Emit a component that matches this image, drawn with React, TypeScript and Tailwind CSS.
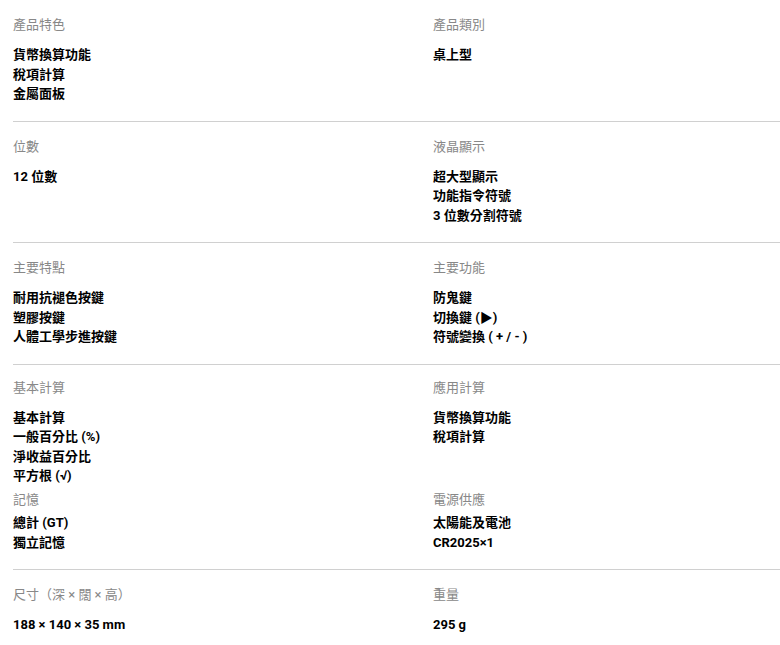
import React from "react";

type Spec = { label: string; values: string[] };

const font = { fontFamily: '"Roboto", "Noto Sans CJK TC", sans-serif' };

function Section({ label, values, last, sub }: Spec & { last?: boolean; sub?: boolean }) {
  return (
    <div className={last ? "" : "mb-[4.5px]"}>
      <p className={`text-[13px] leading-[19.5px] text-[#888888] ${sub ? "mb-[3.5px]" : "mb-[10.5px]"}`}>{label}</p>
      {values.map((v) => (
        <p key={v} className="text-[13px] leading-[19.5px] font-bold text-black">
          {v}
        </p>
      ))}
    </div>
  );
}

const rows: [Spec[], Spec[]][] = [
  [
    [{ label: "產品特色", values: ["貨幣換算功能", "稅項計算", "金屬面板"] }],
    [{ label: "產品類別", values: ["桌上型"] }],
  ],
  [
    [{ label: "位數", values: ["12 位數"] }],
    [{ label: "液晶顯示", values: ["超大型顯示", "功能指令符號", "3 位數分割符號"] }],
  ],
  [
    [{ label: "主要特點", values: ["耐用抗褪色按鍵", "塑膠按鍵", "人體工學步進按鍵"] }],
    [{ label: "主要功能", values: ["防鬼鍵", "切換鍵 (▶)", "符號變換 ( + / - )"] }],
  ],
  [
    [
      { label: "基本計算", values: ["基本計算", "一般百分比 (%)", "淨收益百分比", "平方根 (√)"] },
      { label: "記憶", values: ["總計 (GT)", "獨立記憶"] },
    ],
    [
      { label: "應用計算", values: ["貨幣換算功能", "稅項計算"] },
      { label: "電源供應", values: ["太陽能及電池", "CR2025×1"] },
    ],
  ],
  [
    [{ label: "尺寸（深 × 闊 × 高）", values: ["188 × 140 × 35 mm"] }],
    [{ label: "重量", values: ["295 g"] }],
  ],
];

export default function App() {
  return (
    <div className="w-[780px] h-[645px] overflow-hidden bg-white" style={font}>
      <div className="w-[808px] pl-[13px]">
        {rows.map(([left, right], i) => {
          const isLast = i === rows.length - 1;
          const subRows = Math.max(left.length, right.length);
          const top = subRows > 1 ? "pt-[13px]" : "pt-[15px]";
          return (
            <div
              key={i}
              className={`grid grid-cols-[375px_375px] gap-x-[45px] ${isLast ? "" : "border-b border-[#d0d0d0]"}`}
            >
              {Array.from({ length: subRows }).map((_, j) => (
                <React.Fragment key={j}>
                  {[left[j], right[j]].map((s, k) => (
                    <div
                      key={k}
                      className={`${j === 0 ? top : ""} ${j === subRows - 1 ? "pb-[17px]" : ""}`}
                    >
                      {s && <Section {...s} last={j === subRows - 1} sub={j > 0} />}
                    </div>
                  ))}
                </React.Fragment>
              ))}
            </div>
          );
        })}
      </div>
    </div>
  );
}
